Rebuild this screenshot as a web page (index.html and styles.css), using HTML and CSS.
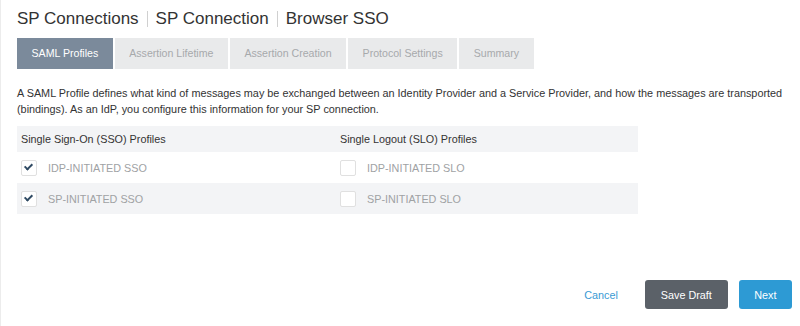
FILE: index.html
```html
<!DOCTYPE html>
<html lang="en">
<head>
    <meta charset="UTF-8">
    <meta name="viewport" content="width=device-width, initial-scale=1.0">
    <title>Browser SSO</title>
    <link rel="stylesheet" href="styles.css">
</head>
<body>
    <div class="page">
        <h1 class="title">
            <span>SP Connections</span><span class="sep"></span><span>SP Connection</span><span class="sep"></span><span>Browser SSO</span>
        </h1>

        <div class="tabs">
            <div class="tab active">SAML Profiles</div>
            <div class="tab">Assertion Lifetime</div>
            <div class="tab">Assertion Creation</div>
            <div class="tab">Protocol Settings</div>
            <div class="tab">Summary</div>
        </div>

        <p class="intro">A SAML Profile defines what kind of messages may be exchanged between an Identity Provider and a Service Provider, and how the messages are transported (bindings). As an IdP, you configure this information for your SP connection.</p>

        <div class="profiles">
            <div class="row head">
                <div class="cell">Single Sign-On (SSO) Profiles</div>
                <div class="cell">Single Logout (SLO) Profiles</div>
            </div>
            <div class="row">
                <label class="cell"><span class="box checked"></span>IDP-INITIATED SSO</label>
                <label class="cell"><span class="box"></span>IDP-INITIATED SLO</label>
            </div>
            <div class="row alt">
                <label class="cell"><span class="box checked"></span>SP-INITIATED SSO</label>
                <label class="cell"><span class="box"></span>SP-INITIATED SLO</label>
            </div>
        </div>

        <div class="actions">
            <a class="cancel" href="#">Cancel</a>
            <button class="button dark">Save Draft</button>
            <button class="button primary">Next</button>
        </div>
    </div>
</body>
</html>
```

FILE: styles.css
```css
body {
    font-family: "Liberation Sans", Arial, sans-serif;
    margin: 0;
    padding: 0;
    background-color: #fff;
    color: #333;
}
.page {
    height: 326px;
    box-sizing: border-box;
    border-left: 1px solid #ececec;
    padding: 8px 8px 0 16px;
    display: flex;
    flex-direction: column;
}
.title {
    font-size: 17px;
    font-weight: normal;
    margin: 0;
    height: 22px;
    line-height: 22px;
    display: flex;
    align-items: center;
    color: #333;
}
.sep {
    display: inline-block;
    width: 1px;
    height: 16px;
    background-color: #d0d0d0;
    margin: 0 8px;
}
.tabs {
    display: flex;
    gap: 2px;
    margin-top: 8px;
}
.tab {
    height: 31px;
    line-height: 31px;
    padding: 0 14.5px;
    font-size: 10.6px;
    background-color: #e9eaeb;
    color: #a7a9ab;
}
.tab.active {
    background-color: #7b8a9b;
    color: #fff;
}
.intro {
    font-size: 10.85px;
    line-height: 16px;
    margin: 16px 0 0 0;
    color: #333;
}
.profiles {
    width: 621px;
    margin-top: 9px;
    font-size: 10.8px;
}
.row {
    display: flex;
    height: 31px;
    align-items: center;
}
.row.head {
    height: 26px;
    background-color: #f3f4f6;
    color: #333;
}
.row.alt {
    background-color: #f3f4f6;
}
.cell {
    display: flex;
    align-items: center;
    flex: 0 0 auto;
    width: 315px;
    padding-left: 4px;
    color: #a0a2a4;
}
.row.head .cell {
    color: #333;
}
.box {
    width: 14px;
    height: 14px;
    border: 1px solid #e0e0e0;
    border-radius: 2px;
    background-color: #fff;
    margin-right: 11px;
    position: relative;
}
.box.checked::after {
    content: "";
    position: absolute;
    left: 4px;
    top: 1px;
    width: 3px;
    height: 6px;
    border: solid #2f4a63;
    border-width: 0 2px 2px 0;
    transform: rotate(45deg);
}
.actions {
    margin-top: auto;
    margin-bottom: 17px;
    display: flex;
    justify-content: flex-end;
    align-items: center;
}
.cancel {
    color: #3a9ad4;
    text-decoration: none;
    font-size: 10.8px;
    margin-right: 27px;
}
.button {
    font-family: "Liberation Sans", Arial, sans-serif;
    height: 29px;
    border: none;
    border-radius: 3px;
    color: #fff;
    font-size: 10.8px;
    cursor: pointer;
}
.button.dark {
    background-color: #5b6168;
    padding: 0 16px;
    margin-right: 11px;
}
.button.primary {
    background-color: #2d9ad4;
    padding: 0 15.5px;
}
```
